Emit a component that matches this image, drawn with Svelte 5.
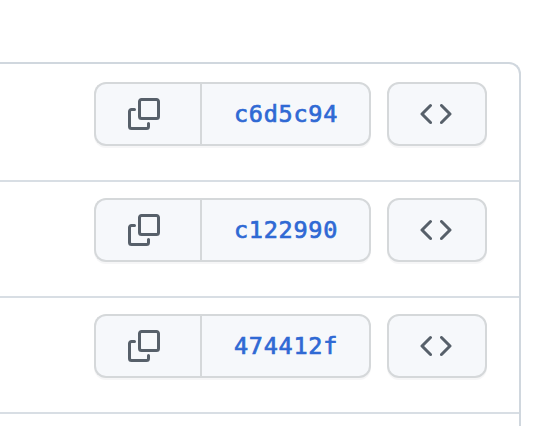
<script>
  const commits = ['c6d5c94', 'c122990', '474412f'];
</script>

<div class="commit-list">
  {#each commits as sha}
    <div class="commit-row">
      <div class="button-group">
        <button class="btn copy" aria-label="Copy the full SHA">
          <svg viewBox="0 0 16 16" width="32" height="32" fill="currentColor">
            <path d="M0 6.75C0 5.784.784 5 1.75 5h1.5a.75.75 0 0 1 0 1.5h-1.5a.25.25 0 0 0-.25.25v7.5c0 .138.112.25.25.25h7.5a.25.25 0 0 0 .25-.25v-1.5a.75.75 0 0 1 1.5 0v1.5A1.75 1.75 0 0 1 9.25 16h-7.5A1.75 1.75 0 0 1 0 14.25Z" />
            <path d="M5 1.75C5 .784 5.784 0 6.75 0h7.5C15.216 0 16 .784 16 1.75v7.5A1.75 1.75 0 0 1 14.25 11h-7.5A1.75 1.75 0 0 1 5 9.25Zm1.75-.25a.25.25 0 0 0-.25.25v7.5c0 .138.112.25.25.25h7.5a.25.25 0 0 0 .25-.25v-7.5a.25.25 0 0 0-.25-.25Z" />
          </svg>
        </button>
        <button class="btn sha">{sha}</button>
      </div>
      <button class="btn browse" aria-label="Browse the repository at this point">
        <svg viewBox="0 0 16 16" width="32" height="32" fill="currentColor">
          <path d="m11.28 3.22 4.25 4.25a.75.75 0 0 1 0 1.06l-4.25 4.25a.749.749 0 0 1-1.275-.326.749.749 0 0 1 .215-.734L13.94 8l-3.72-3.72a.749.749 0 0 1 .326-1.275.749.749 0 0 1 .734.215Zm-6.56 0a.751.751 0 0 1 1.042.018.751.751 0 0 1 .018 1.042L2.06 8l3.72 3.72a.749.749 0 0 1-.326 1.275.749.749 0 0 1-.734-.215L.47 8.53a.75.75 0 0 1 0-1.06Z" />
        </svg>
      </button>
    </div>
  {/each}
  <div class="commit-row"></div>
</div>

<style>
  :global(body) {
    background: #fff;
    overflow: hidden;
  }

  :global(#app) {
    height: 426px;
    overflow: hidden;
  }

  .commit-list {
    box-sizing: border-box;
    width: 521px;
    height: 400px;
    margin-top: 62px;
    border: 2px solid #d0d7de;
    border-left: none;
    border-bottom: none;
    border-top-right-radius: 12px;
  }

  .commit-row {
    display: flex;
    justify-content: flex-end;
    gap: 16px;
    padding: 16px 32px 34px 0;
    border-top: 2px solid #d8dee4;
  }

  .commit-row:first-child {
    border-top-color: transparent;
  }

  .button-group {
    display: flex;
  }

  .btn {
    box-sizing: border-box;
    display: flex;
    align-items: center;
    justify-content: center;
    height: 64px;
    margin: 0;
    padding: 0;
    background: #f6f8fb;
    border: 2px solid #d5d8da;
    border-radius: 12px;
    box-shadow: 0 2px 0 rgba(31, 35, 40, 0.04);
    color: #57606a;
    cursor: pointer;
  }

  .btn:hover {
    background: #f3f4f6;
  }

  .copy {
    width: 106px;
    padding-right: 8px;
    border-right: none;
    border-radius: 12px 0 0 12px;
  }

  .sha {
    width: 171px;
    padding-left: 1px;
    border-radius: 0 12px 12px 0;
    color: #2f69d4;
    font-family: 'DejaVu Sans Mono', monospace;
    font-size: 23.5px;
    letter-spacing: 0.72px;
    -webkit-text-stroke: 0.7px currentColor;
  }

  .browse {
    width: 100px;
    padding-right: 2px;
  }

  svg {
    display: block;
  }
</style>
